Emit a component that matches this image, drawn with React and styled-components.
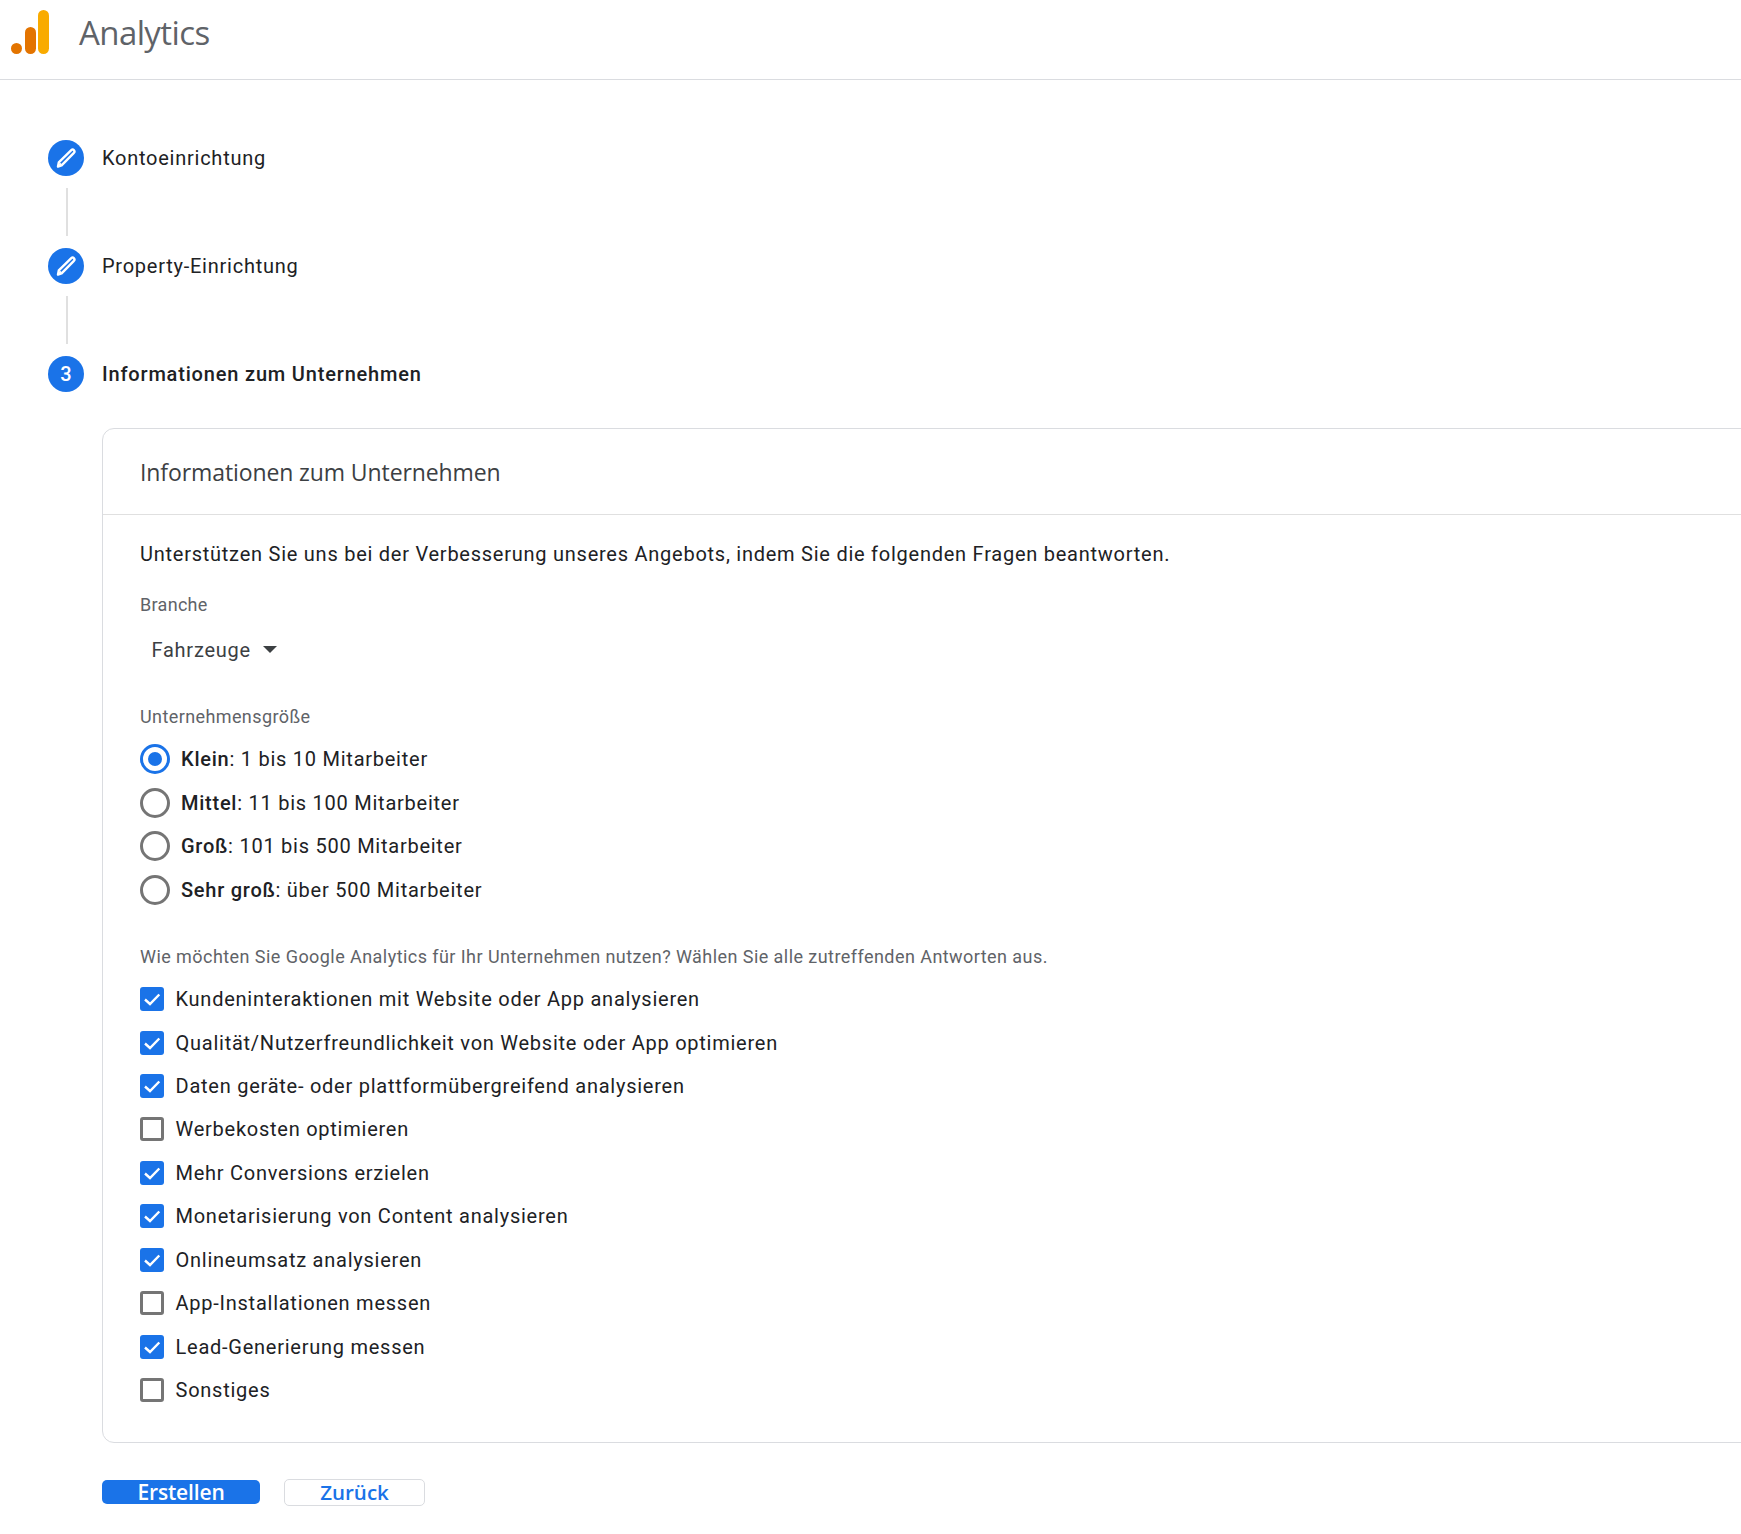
import React from "react";
import styled, { createGlobalStyle } from "styled-components";

const Global = createGlobalStyle`
  html, body { margin: 0; padding: 0; background: #fff; overflow: hidden; }
  body { font-family: Roboto, "Liberation Sans", sans-serif; color: #202124; }
`;
const Page = styled.div`width: 1741px; height: 1534px; overflow: hidden; background: #fff;`;
const Header = styled.header`
  height: 64px; padding: 0 0 15px 11px; display: flex; align-items: center; border-bottom: 1px solid #dadce0; box-sizing: content-box;
  gap: 29px;
`;
const LogoText = styled.span`font-family: "Open Sans", sans-serif; font-size: 33px; color: #5f6368; letter-spacing: -0.6px;`;
const Main = styled.main`padding: 60px 0 0 48px;`;
const Step = styled.div`display: flex; align-items: center; height: 36px; gap: 18px;`;
const StepCircle = styled.div`
  width: 36px; height: 36px; border-radius: 50%; background: #1a73e8; color: #fff;
  display: flex; align-items: center; justify-content: center; font-size: 20px; font-weight: 500;
`;
const StepLabel = styled.div`font-size: 20px; letter-spacing: ${p => (p.$active ? 0.82 : 0.75)}px; font-weight: ${p => (p.$active ? 500 : 400)};`;
const Connector = styled.div`width: 2px; height: 48px; margin: 12px 0 12px 18px; background: #e0e0e0;`;
const Card = styled.section`
  width: 1800px; margin: 36px 0 0 54px; height: 1015px; border: 1px solid #dadce0; border-radius: 12px; box-sizing: border-box;
`;
const CardTitle = styled.h2`
  margin: 0; height: 86px; display: flex; align-items: center; padding-left: 37px;
  border-bottom: 1px solid #e0e0e0; box-sizing: border-box; font-family: "Open Sans", sans-serif;
  font-size: 23px; font-weight: 400; letter-spacing: -0.1px; color: #3c4043;
`;
const CardBody = styled.div`padding: 24px 0 0 37px;`;
const Intro = styled.p`margin: 0; font-size: 20px; line-height: 30px; letter-spacing: 0.75px; color: #202124;`;
const FieldLabel = styled.div`font-size: 18px; line-height: 24px; letter-spacing: ${p => p.$spacing}px; color: #5f6368; margin-top: ${p => p.$top}px;`;
const Select = styled.div`
  display: flex; align-items: center; gap: 12px; height: 30px; margin: 18px 0 0 11.5px;
  font-size: 20px; letter-spacing: 0.75px; color: #3c4043;
`;
const Caret = styled.span`width: 0; height: 0; border-left: 7.5px solid transparent; border-right: 7.5px solid transparent; border-top: 7.5px solid #3c4043;`;
const OptionList = styled.div`margin-top: ${p => p.$top}px; display: flex; flex-direction: column;`;
const Option = styled.div`display: flex; align-items: center; height: 43.45px; font-size: 20px; letter-spacing: 0.75px; gap: ${p => p.$gap}px; white-space: nowrap;`;
const Radio = styled.span`
  width: 30px; height: 30px; border-radius: 50%; box-sizing: border-box; flex: none;
  border: 3px solid ${p => (p.$on ? "#1a73e8" : "#757575")}; display: flex; align-items: center; justify-content: center;
  &::after { content: ""; width: 14px; height: 14px; border-radius: 50%; background: ${p => (p.$on ? "#1a73e8" : "transparent")}; }
`;
const Box = styled.span`
  width: 24px; height: 24px; border-radius: 3px; box-sizing: border-box; flex: none;
  background: ${p => (p.$on ? "#1a73e8" : "#fff")}; border: ${p => (p.$on ? "0" : "3px solid #757575")};
  display: flex; align-items: center; justify-content: center;
`;
const Strong = styled.b`font-weight: 500;`;
const Actions = styled.div`display: flex; align-items: center; gap: 24px; margin: 35.5px 0 0 54px;`;
const PrimaryButton = styled.button`
  width: 158px; height: 24px; border: 0; border-radius: 5px; background: #1a73e8; color: #fff; padding: 0;
  font-family: "Open Sans", sans-serif; font-size: 21px; font-weight: 600; line-height: 24px; letter-spacing: -0.15px;
`;
const SecondaryButton = styled.button`
  width: 141px; height: 27px; border: 1px solid #dadce0; border-radius: 5px; background: #fff; color: #1a73e8; padding: 0;
  font-family: "Open Sans", sans-serif; font-size: 20.5px; font-weight: 600; line-height: 24px; letter-spacing: 0;
`;

const Logo = () => (
  <svg width="39" height="45" viewBox="0 0 39 45">
    <rect x="27" y="0" width="11" height="44" rx="5.5" fill="#f9ab00" />
    <rect x="14" y="17" width="11" height="27" rx="5.5" fill="#e37400" />
    <circle cx="5.5" cy="38.5" r="5.5" fill="#e37400" />
  </svg>
);
const Pencil = () => (
  <svg width="36" height="36" viewBox="0 0 36 36" fill="none">
    <path d="M10 26.5 L10.8 22.4 L23.3 10.2 Q24.6 9 25.9 10.2 Q27.1 11.5 25.9 12.8 L13.6 25.3 Z" stroke="#fff" strokeWidth="2.4" strokeLinejoin="round" />
    <path d="M11 25.6 L13 23.5" stroke="#fff" strokeWidth="2" />
  </svg>
);
const Check = () => (
  <svg width="24" height="24" viewBox="0 0 24 24" fill="none">
    <path d="M5 12.5 L10 17 L19.3 7.5" stroke="#fff" strokeWidth="2.4" />
  </svg>
);

const sizes = [
  ["Klein", ": 1 bis 10 Mitarbeiter", true],
  ["Mittel", ": 11 bis 100 Mitarbeiter", false],
  ["Groß", ": 101 bis 500 Mitarbeiter", false],
  ["Sehr groß", ": über 500 Mitarbeiter", false],
];
const uses = [
  ["Kundeninteraktionen mit Website oder App analysieren", true],
  ["Qualität/Nutzerfreundlichkeit von Website oder App optimieren", true],
  ["Daten geräte- oder plattformübergreifend analysieren", true],
  ["Werbekosten optimieren", false],
  ["Mehr Conversions erzielen", true],
  ["Monetarisierung von Content analysieren", true],
  ["Onlineumsatz analysieren", true],
  ["App-Installationen messen", false],
  ["Lead-Generierung messen", true],
  ["Sonstiges", false],
];

export default function App() {
  return (
    <Page>
      <Global />
      <Header>
        <Logo />
        <LogoText>Analytics</LogoText>
      </Header>
      <Main>
        <Step><StepCircle><Pencil /></StepCircle><StepLabel>Kontoeinrichtung</StepLabel></Step>
        <Connector />
        <Step><StepCircle><Pencil /></StepCircle><StepLabel>Property-Einrichtung</StepLabel></Step>
        <Connector />
        <Step><StepCircle>3</StepCircle><StepLabel $active>Informationen zum Unternehmen</StepLabel></Step>
        <Card>
          <CardTitle>Informationen zum Unternehmen</CardTitle>
          <CardBody>
            <Intro>Unterstützen Sie uns bei der Verbesserung unseres Angebots, indem Sie die folgenden Fragen beantworten.</Intro>
            <FieldLabel $top={23.5} $spacing={0.3}>Branche</FieldLabel>
            <Select>Fahrzeuge <Caret /></Select>
            <FieldLabel $top={40.5} $spacing={0.4}>Unternehmensgröße</FieldLabel>
            <OptionList $top={8.6}>
              {sizes.map(([b, t, on]) => (
                <Option key={b} $gap={11}><Radio $on={on} /><span><Strong>{b}</Strong>{t}</span></Option>
              ))}
            </OptionList>
            <FieldLabel $top={33.4} $spacing={0.44}>Wie möchten Sie Google Analytics für Ihr Unternehmen nutzen? Wählen Sie alle zutreffenden Antworten aus.</FieldLabel>
            <OptionList $top={8.7}>
              {uses.map(([t, on]) => (
                <Option key={t} $gap={11.5}><Box $on={on}>{on && <Check />}</Box>{t}</Option>
              ))}
            </OptionList>
          </CardBody>
        </Card>
        <Actions>
          <PrimaryButton>Erstellen</PrimaryButton>
          <SecondaryButton>Zurück</SecondaryButton>
        </Actions>
      </Main>
    </Page>
  );
}
